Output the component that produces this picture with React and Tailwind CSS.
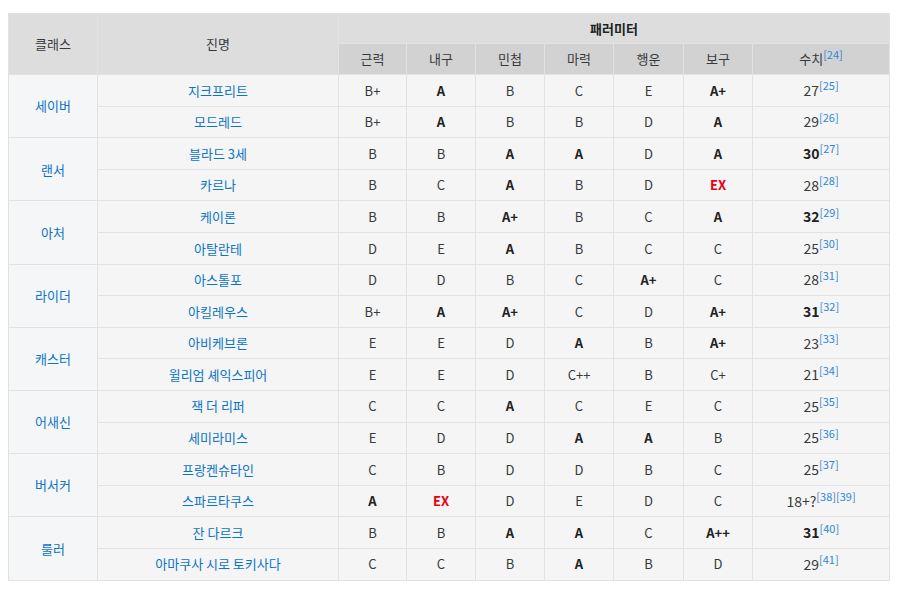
const rows = [
  ["세이버", [
    ["지크프리트", ["B+", "*A", "B", "C", "E", "*A+"], ["27", false, ["25"]]],
    ["모드레드", ["B+", "*A", "B", "B", "D", "*A"], ["29", false, ["26"]]],
  ]],
  ["랜서", [
    ["블라드 3세", ["B", "B", "*A", "*A", "D", "*A"], ["30", true, ["27"]]],
    ["카르나", ["B", "C", "*A", "B", "D", "!EX"], ["28", false, ["28"]]],
  ]],
  ["아처", [
    ["케이론", ["B", "B", "*A+", "B", "C", "*A"], ["32", true, ["29"]]],
    ["아탈란테", ["D", "E", "*A", "B", "C", "C"], ["25", false, ["30"]]],
  ]],
  ["라이더", [
    ["아스톨포", ["D", "D", "B", "C", "*A+", "C"], ["28", false, ["31"]]],
    ["아킬레우스", ["B+", "*A", "*A+", "C", "D", "*A+"], ["31", true, ["32"]]],
  ]],
  ["캐스터", [
    ["아비케브론", ["E", "E", "D", "*A", "B", "*A+"], ["23", false, ["33"]]],
    ["윌리엄 셰익스피어", ["E", "E", "D", "C++", "B", "C+"], ["21", false, ["34"]]],
  ]],
  ["어새신", [
    ["잭 더 리퍼", ["C", "C", "*A", "C", "E", "C"], ["25", false, ["35"]]],
    ["세미라미스", ["E", "D", "D", "*A", "*A", "B"], ["25", false, ["36"]]],
  ]],
  ["버서커", [
    ["프랑켄슈타인", ["C", "B", "D", "D", "B", "C"], ["25", false, ["37"]]],
    ["스파르타쿠스", ["*A", "!EX", "D", "E", "D", "C"], ["18+?", false, ["38", "39"]]],
  ]],
  ["룰러", [
    ["잔 다르크", ["B", "B", "*A", "*A", "C", "*A++"], ["31", true, ["40"]]],
    ["아마쿠사 시로 토키사다", ["C", "C", "B", "*A", "B", "D"], ["29", false, ["41"]]],
  ]],
];

const stats = ["근력", "내구", "민첩", "마력", "행운", "보구"];

function Grade({ v }) {
  if (v.startsWith("!")) return <span className="font-bold text-[#e60012]">{v.slice(1)}</span>;
  if (v.startsWith("*")) return <span className="font-bold text-[#222]">{v.slice(1)}</span>;
  return <span>{v}</span>;
}

function Refs({ refs }) {
  return (
    <sup className="text-[11px] text-[#2f86d4]">
      {refs.map((r) => `[${r}]`).join("")}
    </sup>
  );
}

const cell = "border border-[#e2e2e2] text-center align-middle";

export default function App() {
  return (
    <div
      className="bg-white min-h-screen pl-2 pt-[13px] text-[13px] text-[#373a3c]"
      style={{ fontFamily: '"Noto Sans CJK KR", "Noto Sans", sans-serif' }}
    >
      <table className="border-collapse table-fixed w-[881px]">
        <colgroup>
          <col className="w-[89px]" />
          <col className="w-[241px]" />
          <col className="w-[68px]" />
          <col className="w-[69px]" />
          <col className="w-[69px]" />
          <col className="w-[69px]" />
          <col className="w-[70px]" />
          <col className="w-[69px]" />
          <col className="w-[137px]" />
        </colgroup>
        <thead>
          <tr className="h-[30px] bg-[#dddddd]">
            <th rowSpan={2} className={`${cell} font-normal border-[#dddddd]`}>클래스</th>
            <th rowSpan={2} className={`${cell} font-normal border-[#dddddd]`}>진명</th>
            <th colSpan={7} className={`${cell} font-bold text-[#222] border-[#dddddd]`}>패러미터</th>
          </tr>
          <tr className="h-[31px] bg-[#d2d2d2]">
            {stats.map((s) => (
              <th key={s} className={`${cell} font-normal border-[#dddddd]`}>{s}</th>
            ))}
            <th className={`${cell} font-normal border-[#dddddd]`}>
              수치<Refs refs={["24"]} />
            </th>
          </tr>
        </thead>
        <tbody>
          {rows.map(([cls, servants]) =>
            servants.map(([name, grades, [total, bold, refs]], i) => (
              <tr key={name} className="h-[31.6px] bg-[#f5f5f5]">
                {i === 0 && (
                  <td rowSpan={2} className={`${cell} bg-[#f5f6f8] text-[#0b74c4]`}>{cls}</td>
                )}
                <td className={`${cell} text-[#0b74c4]`}>{name}</td>
                {grades.map((g, j) => (
                  <td key={j} className={cell}><Grade v={g} /></td>
                ))}
                <td className={cell}>
                  <span className={bold ? "font-bold text-[#222] text-[14px]" : "text-[14px]"}>{total}</span>
                  <Refs refs={refs} />
                </td>
              </tr>
            ))
          )}
        </tbody>
      </table>
    </div>
  );
}
